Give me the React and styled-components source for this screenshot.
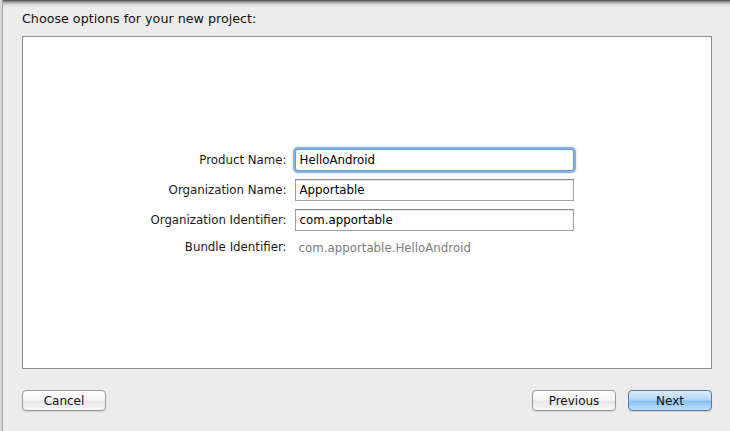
import React from "react";
import styled, { createGlobalStyle } from "styled-components";

const GlobalStyle = createGlobalStyle`
  html, body {
    margin: 0;
    padding: 0;
    background: #d6d6d6;
  }
  #root {
    height: 431px;
  }
`;

const fields = [
  { label: "Product Name:", value: "HelloAndroid", focused: true },
  { label: "Organization Name:", value: "Apportable" },
  { label: "Organization Identifier:", value: "com.apportable" }
];

const App = () => (
  <Sheet>
    <GlobalStyle />
    <Title>Choose options for your new project:</Title>
    <Panel>
      <Form>
        {fields.map(f => (
          <React.Fragment key={f.label}>
            <Label>{f.label}</Label>
            <Input focused={f.focused}>{f.value}</Input>
          </React.Fragment>
        ))}
        <Label>Bundle Identifier:</Label>
        <StaticValue>com.apportable.HelloAndroid</StaticValue>
      </Form>
    </Panel>
    <Footer>
      <Button>Cancel</Button>
      <Spacer />
      <Button>Previous</Button>
      <Button primary>Next</Button>
    </Footer>
  </Sheet>
);

const Sheet = styled.div`
  box-sizing: border-box;
  height: 431px;
  margin-left: 2px;
  border-left: 1px solid #a4a4a4;
  padding: 0 18px 0 19px;
  display: flex;
  flex-direction: column;
  font-family: "DejaVu Sans", "Liberation Sans", sans-serif;
  background: linear-gradient(
      to bottom,
      rgba(40, 40, 40, 0.85) 0,
      rgba(60, 60, 60, 0.45) 2px,
      rgba(0, 0, 0, 0.12) 4px,
      rgba(0, 0, 0, 0) 7px
    ),
    #ececec;
`;

const Title = styled.div`
  height: 36px;
  line-height: 36px;
  padding-top: 1px;
  box-sizing: border-box;
  font-size: 12.7px;
  color: #111;
`;

const Panel = styled.div`
  flex: 1;
  background: #fff;
  border: 1px solid #8e8e8e;
  display: flex;
  align-items: center;
  justify-content: center;
  padding-right: 10px;
`;

const Form = styled.div`
  display: grid;
  grid-template-columns: auto 279px;
  column-gap: 8px;
  row-gap: 8px;
  align-items: center;
  margin-top: -2px;
`;

const Label = styled.div`
  justify-self: end;
  font-size: 11.8px;
  color: #1a1a1a;
`;

const Input = styled.div`
  box-sizing: border-box;
  height: 22px;
  padding: 0 4px;
  display: flex;
  align-items: center;
  font-size: 11.8px;
  color: #000;
  background: #fff;
  border: 1px solid ${p => (p.focused ? "#6d9bd3" : "#a0a0a0")};
  border-top-color: ${p => (p.focused ? "#6d9bd3" : "#8c8c8c")};
  border-radius: ${p => (p.focused ? "3px" : "0")};
  box-shadow: ${p =>
    p.focused
      ? "0 0 0 2px rgba(110, 160, 220, 0.75), 0 0 3px 2px rgba(110, 160, 220, 0.4)"
      : "inset 0 1px 0 #e6e6e6"};
`;

const StaticValue = styled.div`
  font-size: 11.8px;
  color: #7d7d7d;
  padding: 2px 4px 0;
`;

const Footer = styled.div`
  height: 62px;
  box-sizing: border-box;
  padding: 21px 0 0 0;
  display: flex;
  align-items: flex-start;
  gap: 12px;
`;

const Spacer = styled.div`
  flex: 1;
`;

const Button = styled.button`
  width: 84px;
  height: 21px;
  padding: 0;
  font-family: "DejaVu Sans", "Liberation Sans", sans-serif;
  font-size: 12px;
  color: #111;
  border-radius: 4px;
  border: 1px solid ${p => (p.primary ? "#5b79a8" : "#9a9a9a")};
  background: ${p =>
    p.primary
      ? "linear-gradient(to bottom, #dcecfc 0%, #b4d6f8 45%, #8cc0f1 55%, #bfe0fd 100%)"
      : "linear-gradient(to bottom, #ffffff 0%, #f6f6f6 45%, #e8e8e8 55%, #f7f7f7 100%)"};
  box-shadow: 0 1px 1px rgba(0, 0, 0, 0.12);
`;

export default App;
